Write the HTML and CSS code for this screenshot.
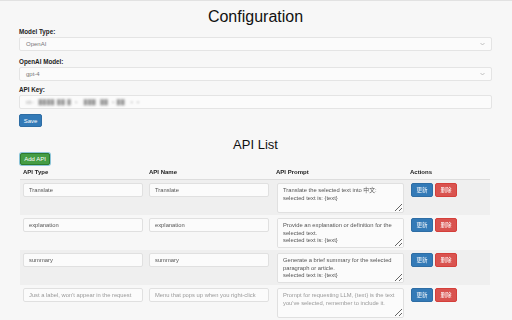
FILE: index.html
```html
<!DOCTYPE html>
<html>
<head>
<meta charset="utf-8">
<link rel="stylesheet" href="styles.css">
</head>
<body>
<div class="page">
  <h1 class="title">Configuration</h1>
  <label class="lbl">Model Type:</label>
  <div class="select"><span>OpenAI</span><svg class="chev" width="5" height="4" viewBox="0 0 5 4"><path d="M0.5 1 L2.5 3 L4.5 1" fill="none" stroke="#aaa" stroke-width="0.7"/></svg></div>
  <label class="lbl">OpenAI Model:</label>
  <div class="select"><span>gpt-4</span><svg class="chev" width="5" height="4" viewBox="0 0 5 4"><path d="M0.5 1 L2.5 3 L4.5 1" fill="none" stroke="#aaa" stroke-width="0.7"/></svg></div>
  <label class="lbl lbl-key">API Key:</label>
  <div class="field key"><span class="blur">sk-  ████ ██ █  ▪   ███  ██  ▪ ██   ▪  ▪</span></div>
  <button class="btn btn-blue save">Save</button>
  <h2 class="subtitle">API List</h2>
  <button class="btn btn-green add">Add API</button>
  <table class="tbl">
    <colgroup><col class="c1"><col class="c2"><col class="c3"><col class="c4"></colgroup>
    <thead>
      <tr><th>API Type</th><th>API Name</th><th>API Prompt</th><th>Actions</th></tr>
    </thead>
    <tbody>
      <tr class="odd">
        <td><input class="inp" value="Translate"></td>
        <td><input class="inp" value="Translate"></td>
        <td class="pc"><textarea class="ta">Translate the selected text into 中文:
selected text is: {text}</textarea></td>
        <td class="ac"><div class="acts"><button class="btn btn-blue sm">更新</button><button class="btn btn-red sm">删除</button></div></td>
      </tr>
      <tr>
        <td><input class="inp" value="explanation"></td>
        <td><input class="inp" value="explanation"></td>
        <td class="pc"><textarea class="ta">Provide an explanation or definition for the selected text.
selected text is: {text}</textarea></td>
        <td class="ac"><div class="acts"><button class="btn btn-blue sm">更新</button><button class="btn btn-red sm">删除</button></div></td>
      </tr>
      <tr class="odd">
        <td><input class="inp" value="summary"></td>
        <td><input class="inp" value="summary"></td>
        <td class="pc"><textarea class="ta">Generate a brief summary for the selected paragraph or article.
selected text is: {text}</textarea></td>
        <td class="ac"><div class="acts"><button class="btn btn-blue sm">更新</button><button class="btn btn-red sm">删除</button></div></td>
      </tr>
      <tr>
        <td><input class="inp" placeholder="Just a label, won't appear in the request"></td>
        <td><input class="inp" placeholder="Menu that pops up when you right-click"></td>
        <td class="pc"><textarea class="ta" placeholder="Prompt for requesting LLM, {text} is the text you've selected, remember to include it."></textarea></td>
        <td class="ac"><div class="acts"><button class="btn btn-blue sm">更新</button><button class="btn btn-red sm">删除</button></div></td>
      </tr>
    </tbody>
  </table>
</div>
</body>
</html>
```
FILE: styles.css
```css
html, body {
  margin: 0;
  padding: 0;
  background: #f7f7f7;
  font-family: "Liberation Sans", Arial, sans-serif;
  color: #333;
  overflow: hidden;
}
.page {
  border-top: 1px solid #e2e2e2;
  padding: 0 20px 0 19px;
  display: flex;
  flex-direction: column;
  align-items: stretch;
}
.title {
  margin: 6px 0 0;
  font-size: 16px;
  line-height: 20px;
  font-weight: normal;
  text-align: center;
  color: #111;
}
.lbl {
  display: block;
  font-size: 6.3px;
  line-height: 8px;
  font-weight: bold;
  color: #222;
  margin-top: 1px;
}
.lbl + .select { margin-top: 1px; }
.select, .field {
  box-sizing: border-box;
  height: 14px;
  border: 1px solid #e4e4e4;
  border-radius: 2px;
  background: #fbfbfb;
  font-size: 6px;
  color: #777;
  padding: 0 6px;
  display: flex;
  align-items: center;
  justify-content: space-between;
}
.select { margin-bottom: 6px; }
.chev { display: block; }
.lbl-key { margin-top: -1px; line-height: 8px; }
.key { margin-top: 1px; justify-content: flex-start; }
.blur {
  filter: blur(0.9px);
  color: #9a9a9a;
  letter-spacing: 0.6px;
  font-size: 5px;
  white-space: pre;
}
.btn {
  font-family: "Liberation Sans", Arial, sans-serif;
  font-size: 6px;
  color: #fff;
  border-radius: 2px;
  border: 1px solid transparent;
  padding: 0;
  box-sizing: border-box;
  cursor: pointer;
  display: block;
}
.btn-blue { background: #337ab7; border-color: #2e6da4; }
.btn-red { background: #d9534f; border-color: #d43f3a; }
.btn-green { background: #449d44; border-color: #2d7a2d; box-shadow: 0 0 0 1px #8bc4d8; }
.save {
  align-self: flex-start;
  width: 23px;
  height: 13px;
  margin-top: 5px;
}
.subtitle {
  margin: 11px 0 0;
  font-size: 13px;
  line-height: 14px;
  font-weight: normal;
  text-align: center;
  color: #111;
}
.add {
  align-self: flex-start;
  width: 30px;
  height: 12px;
  margin: 1px 0 0 1px;
}
.tbl {
  margin: 0 0 0 1px;
  width: 470px;
  border-collapse: collapse;
  table-layout: fixed;
}
.c1 { width: 126px; }
.c2 { width: 127px; }
.c3 { width: 134px; }
.c4 { width: 83px; }
.tbl th {
  text-align: left;
  font-size: 6px;
  font-weight: bold;
  color: #222;
  padding: 3px 3px 3px;
  line-height: 8px;
  border-bottom: 1px solid #ddd;
}
.tbl td {
  padding: 3px 3px 2px;
  vertical-align: top;
}
.tbl tr.odd td { background: #efefef; }
.tbl td.pc { padding-left: 4px; }
.tbl td.ac { padding-left: 4px; }
.acts { display: flex; gap: 2px; }
.inp {
  box-sizing: border-box;
  width: 120px;
  height: 14px;
  border: 1px solid #e0e0e0;
  border-radius: 2px;
  background: #fbfbfb;
  font-family: "Liberation Sans", Arial, sans-serif;
  font-size: 5.8px;
  color: #555;
  padding: 0 5px;
  display: block;
}
.inp::placeholder { color: #999; }
.ta {
  box-sizing: border-box;
  width: 127px;
  height: 30px;
  border: 1px solid #e0e0e0;
  border-radius: 2px;
  background: #fbfbfb;
  font-family: "Liberation Sans", "Noto Sans CJK SC", Arial, sans-serif;
  font-size: 5.8px;
  line-height: 7.5px;
  color: #555;
  padding: 3px 5px;
  display: block;
  margin: 0;
}
.ta::placeholder { color: #999; }
.sm {
  width: 22px;
  height: 14px;
  font-family: "Noto Sans CJK SC", sans-serif;
  font-size: 5.5px;
}
```
